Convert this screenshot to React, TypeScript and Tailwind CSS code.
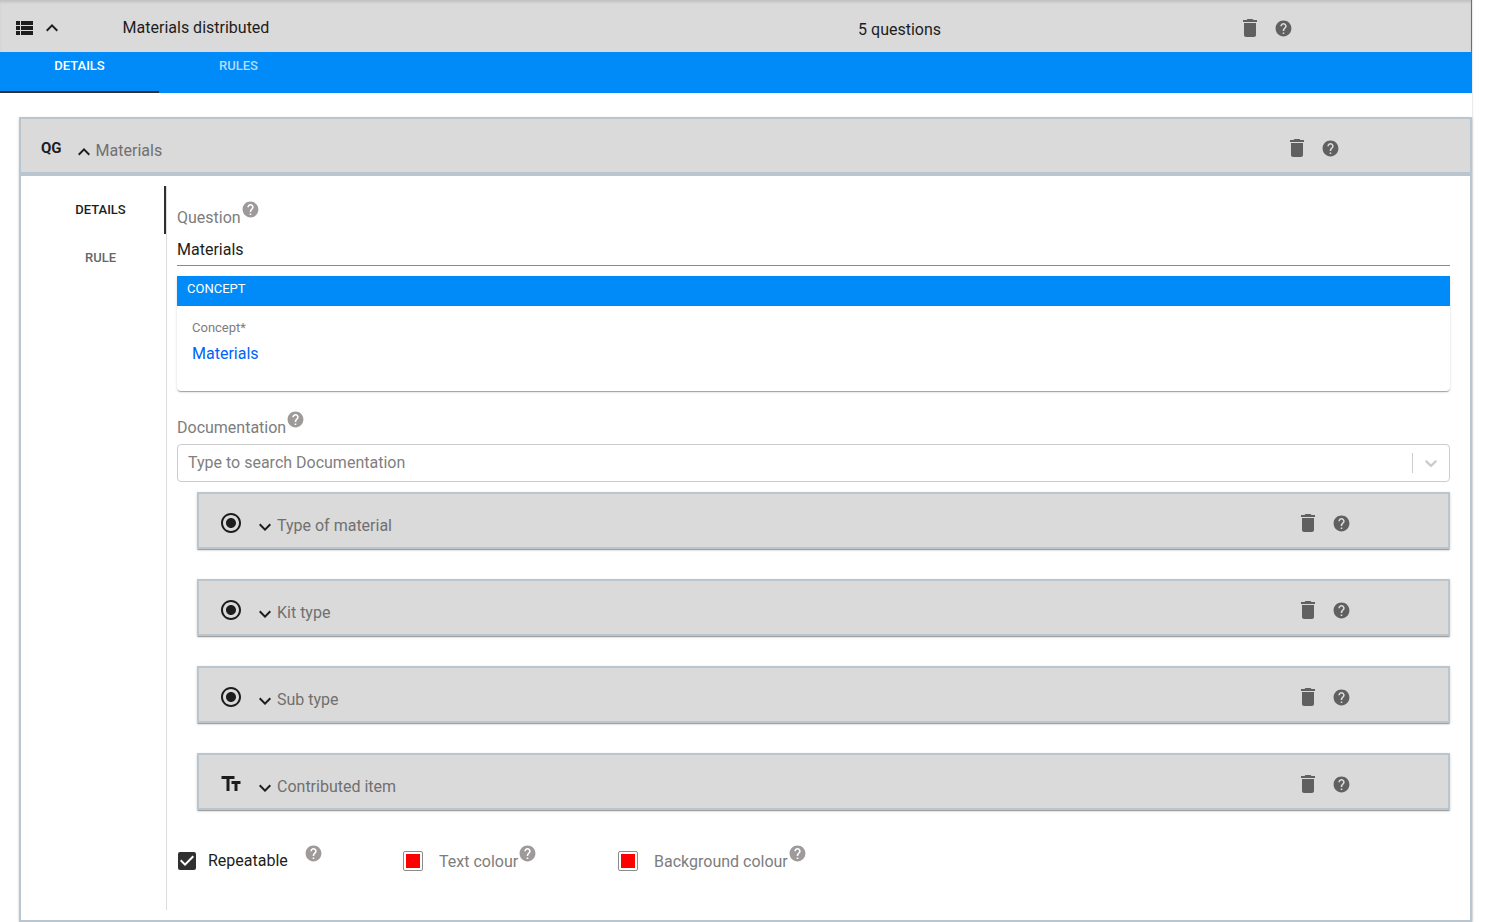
import React, { useState } from 'react';
import {
  MdDelete,
  MdExpandLess,
  MdExpandMore,
  MdHelp,
  MdRadioButtonChecked,
  MdTextFields,
  MdCheckBox,
  MdCheckBoxOutlineBlank,
} from 'react-icons/md';
import { clsx } from 'clsx';

const childQuestions = [
  { icon: MdRadioButtonChecked, name: 'Type of material' },
  { icon: MdRadioButtonChecked, name: 'Kit type' },
  { icon: MdRadioButtonChecked, name: 'Sub type' },
  { icon: MdTextFields, name: 'Contributed item' },
];

const paperShadow =
  'shadow-[0_2px_1px_-1px_rgba(0,0,0,0.2),0_1px_1px_0_rgba(0,0,0,0.14),0_1px_3px_0_rgba(0,0,0,0.12)]';

const ViewListIcon = () => (
  <svg viewBox="0 0 24 24" className="size-6 fill-current" aria-hidden="true">
    <path d="M4 14h4v-4H4v4zm0 5h4v-4H4v4zM4 9h4V5H4v4zm5 5h12v-4H9v4zm0 5h12v-4H9v4zM9 5v4h12V5H9z" />
  </svg>
);

const RowActions = ({ className }: { className?: string }) => (
  <div className={clsx('flex items-center gap-3 text-[#606060]', className)}>
    <button type="button" aria-label="Delete">
      <MdDelete className="size-6" />
    </button>
    <button type="button" aria-label="Help">
      <MdHelp className="size-[19px]" />
    </button>
  </div>
);

const HelpMark = () => (
  <button type="button" aria-label="Help" className="mb-4 text-[#9e9a9a]">
    <MdHelp className="size-[19px]" />
  </button>
);

type QuestionHeaderProps = {
  badge: React.ReactNode;
  name: string;
  open?: boolean;
};

const QuestionHeader = ({ badge, name, open = false }: QuestionHeaderProps) => {
  const Chevron = open ? MdExpandLess : MdExpandMore;
  return (
    <div className="grid h-[53px] grid-cols-12 items-center bg-[#dadada] pt-[5px]">
      <div className="col-span-10 flex items-center gap-[10px] pl-5">
        {badge}
        <button type="button" aria-expanded={open} className="flex items-center pt-[6px] text-[#707070]">
          <Chevron className="mt-[2px] size-6 text-[#1d1d1d]" />
          {name}
        </button>
      </div>
      <RowActions className="col-span-2 pl-14" />
    </div>
  );
};

const ColourField = ({ id, label }: { id: string; label: string }) => (
  <div className="flex items-center">
    <button
      type="button"
      id={id}
      className="size-5 rounded-xs border border-[#8f8a8a] bg-white p-[2px]"
    >
      <span className="block size-full bg-[#ff0000]" />
    </button>
    <label htmlFor={id} className="pl-4 pt-[2px] text-[#7d7d7d]">
      {label}
    </label>
    <HelpMark />
  </div>
);

const TopBar = () => (
  <header className="mr-px grid h-[52px] grid-cols-12 items-center bg-[#dadada] pt-1 text-[#1d1d1d] shadow-[inset_0_3px_3px_-1px_rgba(0,0,0,0.12)]">
    <div className="flex items-center gap-1 pl-3">
      <ViewListIcon />
      <button type="button" aria-label="Collapse">
        <MdExpandLess className="size-6" />
      </button>
    </div>
    <h1 className="col-span-6">Materials distributed</h1>
    <p className="col-span-3 pt-1">5 questions</p>
    <RowActions className="col-span-2 pl-3" />
  </header>
);

const TopTabs = () => (
  <nav role="tablist" className="flex h-[41px] text-[13px] font-medium leading-7">
    <button
      type="button"
      role="tab"
      aria-selected="true"
      className="flex w-[159px] justify-center border-b-2 border-[#303030] text-white"
    >
      DETAILS
    </button>
    <button
      type="button"
      role="tab"
      aria-selected="false"
      className="flex w-[159px] justify-center border-b-2 border-transparent text-[#b3dcfd]"
    >
      RULES
    </button>
  </nav>
);

const SideTabs = () => (
  <nav
    role="tablist"
    aria-orientation="vertical"
    className="w-[146px] shrink-0 border-r border-[#dcdcdc] text-[13px] font-medium"
  >
    <button
      type="button"
      role="tab"
      aria-selected="true"
      className="h-12 w-full border-r-2 border-[#303030] pl-4 text-[#1d1d1d]"
    >
      DETAILS
    </button>
    <button
      type="button"
      role="tab"
      aria-selected="false"
      className="h-12 w-full border-r-2 border-transparent pl-4 text-[#666666]"
    >
      RULE
    </button>
  </nav>
);

export default function App() {
  const [question, setQuestion] = useState('Materials');
  const [repeatable, setRepeatable] = useState(true);
  const CheckIcon = repeatable ? MdCheckBox : MdCheckBoxOutlineBlank;

  return (
    <div className="min-h-screen bg-white pr-[23px] font-['Roboto',sans-serif] text-base text-[#1d1d1d]">
      <main className="shadow-[0_0_2px_rgba(0,0,0,0.25)]">
        <div className="bg-[#008bf8]">
          <TopBar />
          <TopTabs />
        </div>

        <div className="pl-[19px] pt-6">
          <section className={clsx('border-2 border-[#b9c6cf]', paperShadow)}>
            <div className="border-b-4 border-[#b9c6cf]">
              <QuestionHeader
                open
                name="Materials"
                badge={<span className="text-[15px] font-bold">QG</span>}
              />
            </div>

            <div className="flex py-[10px]">
              <SideTabs />

              <div className="min-w-0 grow pb-[30px] pl-[10px] pr-5 pt-3">
                <div className="flex h-[38px] items-center">
                  <label htmlFor="question" className="pt-[2px] text-[#7d7d7d]">
                    Question
                  </label>
                  <HelpMark />
                </div>
                <input
                  id="question"
                  value={question}
                  onChange={(e) => setQuestion(e.target.value)}
                  className="block h-[30px] w-full border-b border-[#8a8a8a] pb-[2px] outline-none"
                />

                <section className={clsx('mt-[10px] rounded-b', paperShadow)}>
                  <h2 className="h-[30px] bg-[#008bf8] pl-[10px] text-[13px] leading-[26px] text-white">
                    CONCEPT
                  </h2>
                  <div className="h-[85px] pl-[15px] pt-3">
                    <p className="text-[13px] leading-5 text-[#7d7d7d]">Concept*</p>
                    <a href="#materials" className="leading-8 text-[#0063f8]">
                      Materials
                    </a>
                  </div>
                </section>

                <div className="mt-[19px] flex h-[34px] items-center">
                  <label htmlFor="documentation" className="pt-[2px] text-[#7d7d7d]">
                    Documentation
                  </label>
                  <HelpMark />
                </div>
                <div className="flex h-[38px] items-center rounded border border-[#cccccc]">
                  <input
                    id="documentation"
                    role="combobox"
                    aria-expanded="false"
                    placeholder="Type to search Documentation"
                    className="h-full min-w-0 grow px-[10px] pb-[2px] outline-none placeholder:text-[#808080]"
                  />
                  <button
                    type="button"
                    aria-label="Open list"
                    className="flex h-5 items-center border-l border-[#cccccc] px-2 text-[#cccccc]"
                  >
                    <svg viewBox="0 0 20 20" className="size-5 fill-current">
                      <path d="M4.516 7.548c0.436-0.446 1.043-0.481 1.576 0l3.908 3.747 3.908-3.747c0.533-0.481 1.141-0.446 1.574 0 0.436 0.445 0.408 1.197 0 1.615-0.406 0.418-4.695 4.502-4.695 4.502-0.217 0.223-0.502 0.335-0.787 0.335s-0.57-0.112-0.789-0.335c0 0-4.287-4.084-4.695-4.502s-0.436-1.17 0-1.615z" />
                    </svg>
                  </button>
                </div>

                <ul className="mt-[10px] flex flex-col gap-[30px] pl-5">
                  {childQuestions.map((q) => (
                    <li key={q.name} className={clsx('border-2 border-[#b9c6cf]', paperShadow)}>
                      <QuestionHeader name={q.name} badge={<q.icon className="size-6" />} />
                    </li>
                  ))}
                </ul>

                <div className="mt-8 flex h-[38px] items-center">
                  <div className="flex w-[226px] items-center">
                    <span className="-ml-[2px] grid size-6">
                      <input
                        id="repeatable"
                        type="checkbox"
                        checked={repeatable}
                        onChange={(e) => setRepeatable(e.target.checked)}
                        className="col-start-1 row-start-1 size-6 appearance-none"
                      />
                      <CheckIcon className="pointer-events-none col-start-1 row-start-1 size-6 text-[#303030]" />
                    </span>
                    <label htmlFor="repeatable" className="pl-[9px] pr-4">
                      Repeatable
                    </label>
                    <HelpMark />
                  </div>
                  <div className="w-[215px]">
                    <ColourField id="text-colour" label="Text colour" />
                  </div>
                  <ColourField id="background-colour" label="Background colour" />
                </div>
              </div>
            </div>
          </section>
        </div>
      </main>
    </div>
  );
}
